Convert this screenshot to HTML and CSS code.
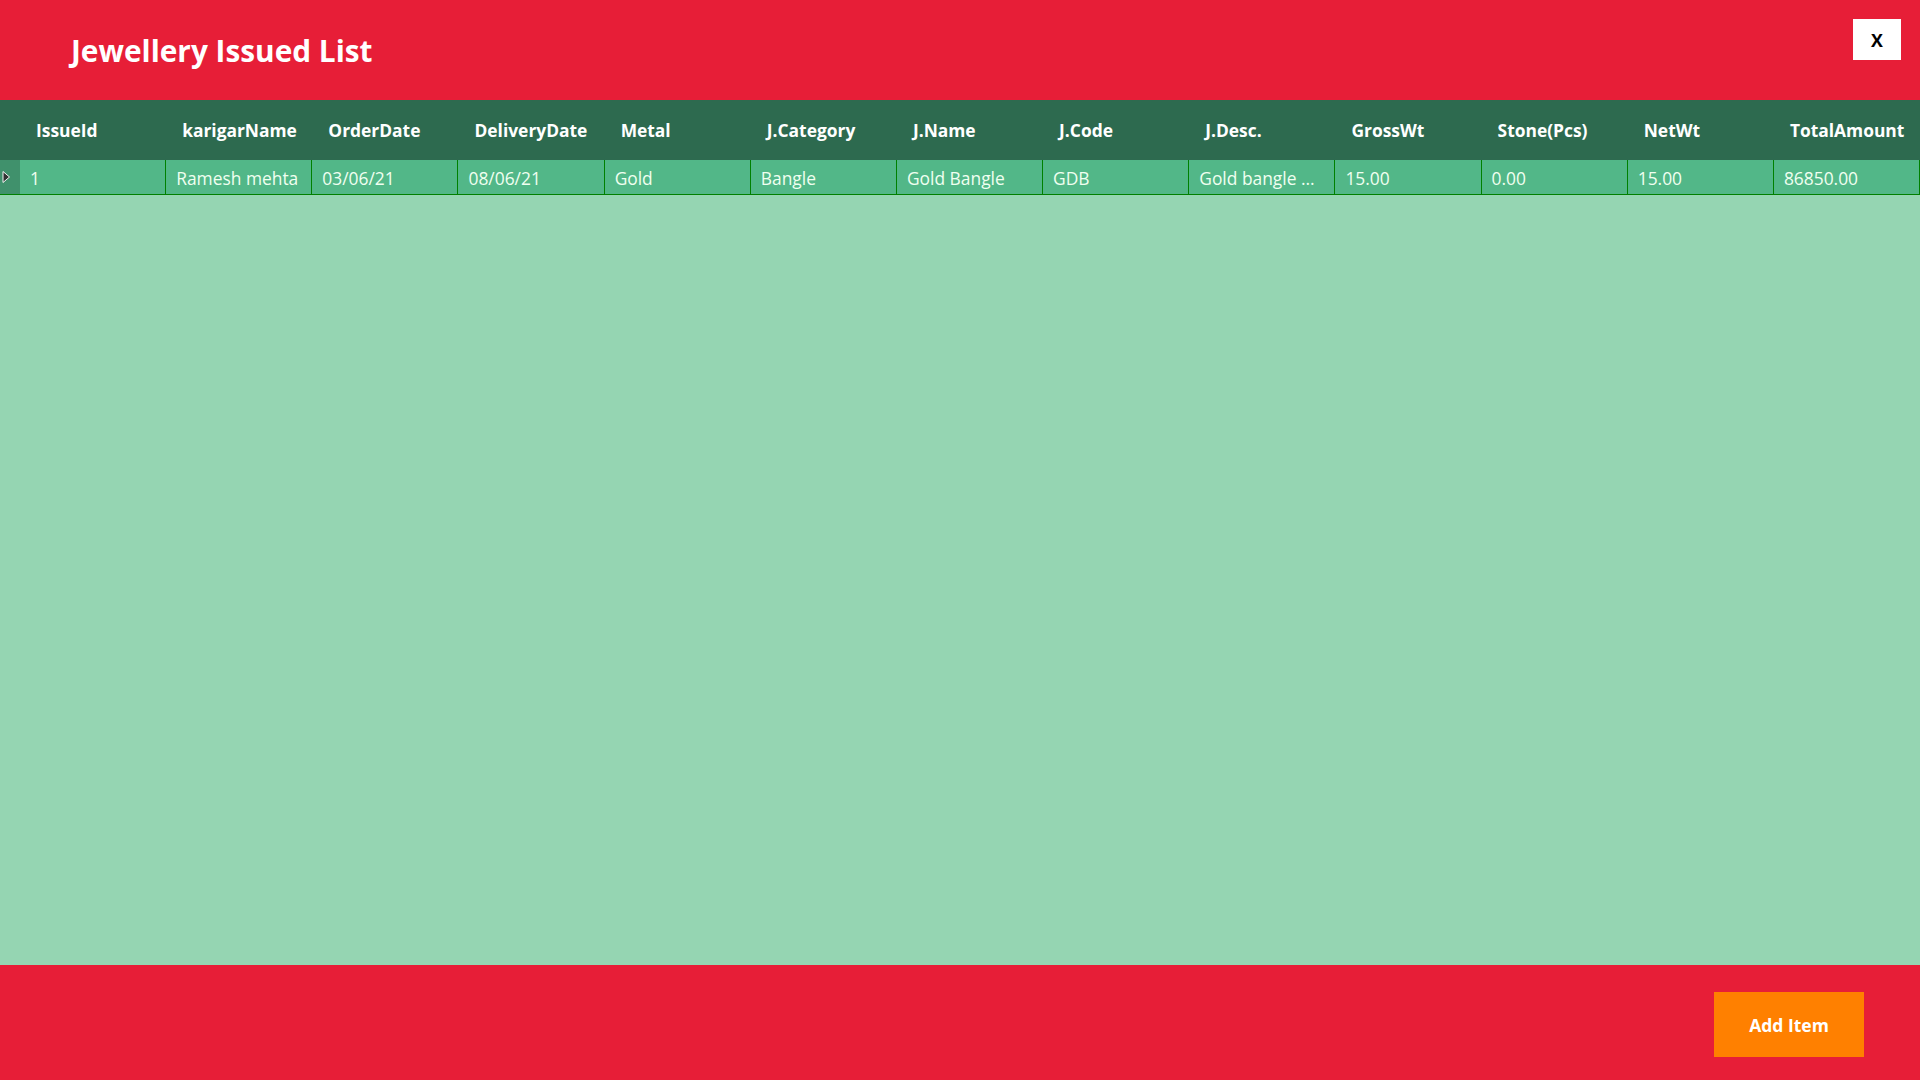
FILE: index.html
```html
<!DOCTYPE html>
<html>
<head>
<meta charset="utf-8">
<title>Jewellery Issued List</title>
<link rel="stylesheet" href="styles.css">
</head>
<body>
<div class="app">
  <header class="topbar">
    <h1 class="title">Jewellery Issued List</h1>
    <button class="close-btn">X</button>
  </header>
  <main class="grid">
    <div class="grid-head">
      <div class="row-head"></div>
      <div class="hcell">IssueId</div>
      <div class="hcell">karigarName</div>
      <div class="hcell">OrderDate</div>
      <div class="hcell">DeliveryDate</div>
      <div class="hcell">Metal</div>
      <div class="hcell">J.Category</div>
      <div class="hcell">J.Name</div>
      <div class="hcell">J.Code</div>
      <div class="hcell">J.Desc.</div>
      <div class="hcell">GrossWt</div>
      <div class="hcell">Stone(Pcs)</div>
      <div class="hcell">NetWt</div>
      <div class="hcell">TotalAmount</div>
    </div>
    <div class="grid-row">
      <div class="row-head current">
        <svg class="glyph" width="9" height="14" viewBox="0 0 9 14"><path d="M1 1.5 L7.5 7 L1 12.5 Z" fill="#333333" stroke="#f2f2f2" stroke-width="1"/></svg>
      </div>
      <div class="cell">1</div>
      <div class="cell">Ramesh mehta</div>
      <div class="cell">03/06/21</div>
      <div class="cell">08/06/21</div>
      <div class="cell">Gold</div>
      <div class="cell">Bangle</div>
      <div class="cell">Gold Bangle</div>
      <div class="cell">GDB</div>
      <div class="cell">Gold bangle ...</div>
      <div class="cell">15.00</div>
      <div class="cell">0.00</div>
      <div class="cell">15.00</div>
      <div class="cell">86850.00</div>
    </div>
  </main>
  <footer class="bottombar">
    <button class="add-btn">Add Item</button>
  </footer>
</div>
</body>
</html>
```
FILE: styles.css
```css
html, body {
  margin: 0;
  padding: 0;
}
body {
  font-family: "Open Sans", "Noto Sans", sans-serif;
  background: #95D5B2;
}
.app {
  width: 1920px;
  height: 1080px;
  display: flex;
  flex-direction: column;
  overflow: hidden;
}
.topbar {
  height: 100px;
  flex: 0 0 100px;
  background: #E71E37;
  display: flex;
  align-items: center;
  padding-left: 71px;
  padding-right: 19px;
  box-sizing: border-box;
}
.title {
  margin: 0;
  font-size: 29.8px;
  font-weight: 700;
  color: #ffffff;
  line-height: 1;
  padding-top: 2px;
}
.close-btn {
  margin-left: auto;
  align-self: flex-start;
  margin-top: 19px;
  width: 48px;
  height: 41px;
  border: none;
  background: #ffffff;
  color: #000000;
  font-family: "Open Sans", sans-serif;
  font-weight: 700;
  font-size: 17.8px;
  padding: 0;
  display: flex;
  align-items: center;
  justify-content: center;
}
.grid {
  flex: 1 1 auto;
  background: #95D5B2;
  display: flex;
  flex-direction: column;
}
.grid-head {
  height: 60px;
  background: #2D6A4F;
  display: flex;
}
.row-head {
  width: 20px;
  flex: 0 0 20px;
}
.hcell {
  flex: 1 1 0;
  min-width: 0;
  box-sizing: border-box;
  padding-left: 16px;
  display: flex;
  align-items: center;
  color: #ffffff;
  font-weight: 700;
  font-size: 17.4px;
  white-space: nowrap;
  padding-bottom: 1px;
}
.grid-row {
  height: 35px;
  display: flex;
  background: #52B788;
  border-bottom: 1px solid #008000;
  box-sizing: border-box;
}
.grid-row .row-head {
  background: #40916C;
  display: flex;
  align-items: center;
  padding-left: 2px;
  box-sizing: border-box;
}
.glyph {
  display: block;
}
.cell {
  flex: 1 1 0;
  min-width: 0;
  box-sizing: border-box;
  border-right: 1px solid #008000;
  padding-left: 10px;
  padding-top: 2px;
  display: flex;
  align-items: center;
  color: #F0FFF0;
  font-size: 17.4px;
  white-space: nowrap;
  overflow: hidden;
}
.bottombar {
  height: 115px;
  flex: 0 0 115px;
  background: #E71E37;
  display: flex;
  justify-content: flex-end;
  align-items: flex-start;
  padding-right: 56px;
  padding-top: 27px;
  box-sizing: border-box;
}
.add-btn {
  width: 150px;
  height: 65px;
  border: none;
  background: #FF8000;
  color: #ffffff;
  font-family: "Open Sans", sans-serif;
  font-weight: 700;
  font-size: 17.5px;
  padding: 0;
}
```
